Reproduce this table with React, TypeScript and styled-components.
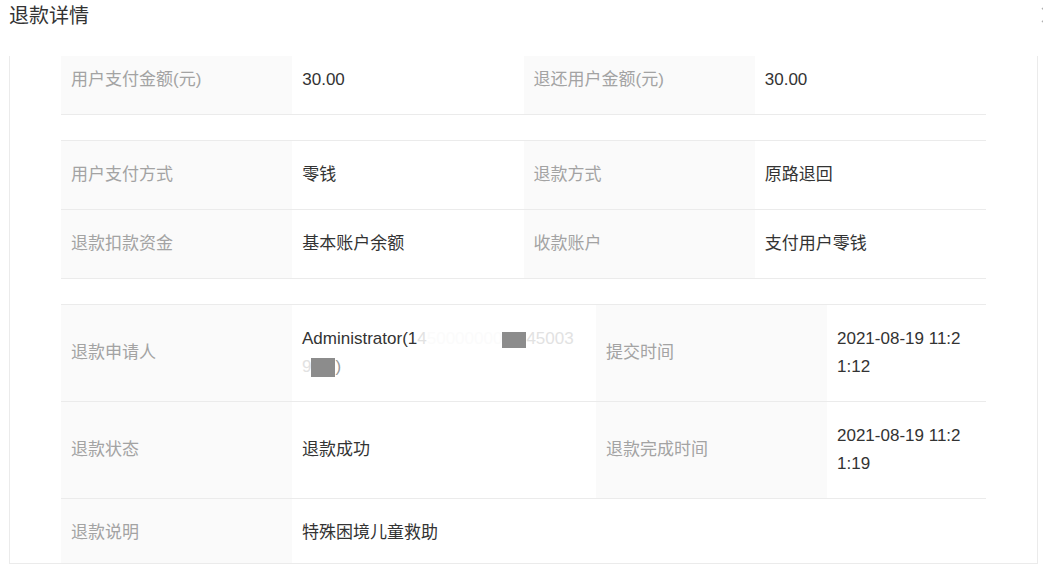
import React from "react";
import styled, { createGlobalStyle } from "styled-components";

const Global = createGlobalStyle`
  html, body {
    margin: 0;
    padding: 0;
    background: #ffffff;
    overflow: hidden;
  }
  body {
    font-family: "Liberation Sans", Arial, "Noto Sans CJK SC", sans-serif;
    color: #333333;
  }
`;

const Page = styled.div`
  width: 1043px;
  height: 569px;
  overflow: hidden;
  display: flex;
  flex-direction: column;
`;

const Header = styled.div`
  height: 56px;
  display: flex;
  justify-content: space-between;
  align-items: flex-start;
  padding-left: 9px;
  flex-shrink: 0;
`;

const Title = styled.h2`
  margin: 0;
  font-size: 20px;
  font-weight: 400;
  line-height: 32px;
  color: #333333;
  font-family: "Liberation Sans", "Noto Sans CJK SC", sans-serif;
`;

const Close = styled.button`
  border: none;
  background: transparent;
  padding: 0;
  margin-top: 6px;
  margin-right: -15px;
  width: 18px;
  height: 18px;
  color: #b0b0b0;
  display: flex;
`;

const Panel = styled.div`
  margin-left: 9px;
  width: 1029px;
  height: 508px;
  box-sizing: border-box;
  border: 1px solid #ebebeb;
  border-top: none;
  padding: 0 51px;
  overflow: hidden;
`;

const Content = styled.div`
  margin-top: -11px;
  display: flex;
  flex-direction: column;
  gap: 25px;
`;

const Table = styled.div<{ $cols: string }>`
  display: grid;
  grid-template-columns: ${(p) => p.$cols};
  border-top: 1px solid #ebebeb;
`;

const Cell = styled.div<{ $label?: boolean; $span?: number; $padRight?: number }>`
  box-sizing: border-box;
  padding: 20px ${(p) => p.$padRight ?? 10}px 20px 10px;
  line-height: 28px;
  font-size: 17px;
  border-bottom: 1px solid #ebebeb;
  background: ${(p) => (p.$label ? "#fafafa" : "#ffffff")};
  color: ${(p) => (p.$label ? "#a3a3a3" : "#333333")};
  display: flex;
  align-items: center;
  word-break: break-all;
  grid-column: span ${(p) => p.$span ?? 1};
`;

const Wrap = styled.div`
  word-break: break-all;
`;

const Faint = styled.span`
  color: #e2e2e2;
`;

const Ghost = styled.span`
  color: #fbfbfb;
`;

const Soft = styled.span`
  color: #9a9a9a;
`;

const Mask = styled.span<{ $w: number; $h: number }>`
  display: inline-block;
  width: ${(p) => p.$w}px;
  height: ${(p) => p.$h}px;
  background: #8c8c8c;
  vertical-align: middle;
  filter: blur(0.6px);
`;

const Rows = styled.div`
  display: contents;
`;

export default function App() {
  return (
    <Page>
      <Global />
      <Header>
        <Title>退款详情</Title>
        <Close aria-label="关闭">
          <svg width="18" height="18" viewBox="0 0 18 18">
            <path d="M2 2 L16 16 M16 2 L2 16" stroke="currentColor" strokeWidth="1.4" />
          </svg>
        </Close>
      </Header>
      <Panel>
        <Content>
          <Table $cols="repeat(4, 1fr)">
            <Cell $label>用户支付金额(元)</Cell>
            <Cell>30.00</Cell>
            <Cell $label>退还用户金额(元)</Cell>
            <Cell>30.00</Cell>
          </Table>
          <Table $cols="repeat(4, 1fr)">
            <Cell $label>用户支付方式</Cell>
            <Cell>零钱</Cell>
            <Cell $label>退款方式</Cell>
            <Cell>原路退回</Cell>
            <Cell $label>退款扣款资金</Cell>
            <Cell>基本账户余额</Cell>
            <Cell $label>收款账户</Cell>
            <Cell>支付用户零钱</Cell>
          </Table>
          <Table $cols="231px 304px 231px 1fr">
            <Rows>
              <Cell $label>退款申请人</Cell>
              <Cell $padRight={20}>
                <Wrap>
                  Administrator(1<Faint>4</Faint>
                  <Ghost>50000000</Ghost>
                  <Mask $w={24} $h={16} />
                  <Faint>45003</Faint>
                  <Faint>9</Faint>
                  <Mask $w={24} $h={19} />
                  <Soft>)</Soft>
                </Wrap>
              </Cell>
              <Cell $label>提交时间</Cell>
              <Cell $padRight={14}>2021-08-19 11:21:12</Cell>
              <Cell $label>退款状态</Cell>
              <Cell>退款成功</Cell>
              <Cell $label>退款完成时间</Cell>
              <Cell $padRight={14}>2021-08-19 11:21:19</Cell>
              <Cell $label>退款说明</Cell>
              <Cell $span={3}>特殊困境儿童救助</Cell>
            </Rows>
          </Table>
        </Content>
      </Panel>
    </Page>
  );
}
